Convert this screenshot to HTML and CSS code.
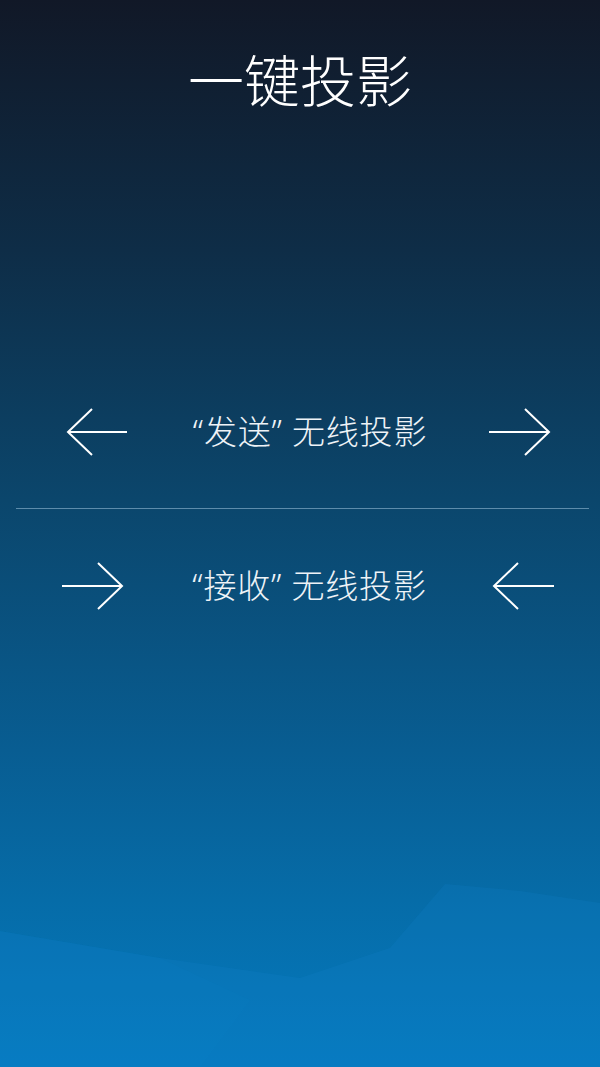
FILE: index.html
```html
<!DOCTYPE html>
<html lang="zh-CN">
<head>
<meta charset="utf-8">
<title>一键投影</title>
<link rel="stylesheet" href="styles.css">
</head>
<body>
<div class="page">
  <svg class="waves" viewBox="0 0 600 1067" preserveAspectRatio="none" aria-hidden="true">
    <polygon class="wave-a" points="0,931 160,958 300,978 390,948 445,884 520,891 600,903 600,1067 0,1067"/>
    <polygon class="wave-b" points="0,931 160,958 250,1000 200,1067 0,1067"/>
  </svg>
  <h1 class="title">一键投影</h1>
  <div class="options">
    <div class="row row-send">
      <svg class="arrow" viewBox="0 0 64 50"><polyline points="26,2 2,25 26,48"/><line x1="2" y1="25" x2="61" y2="25"/></svg>
      <span class="label">“发送” 无线投影</span>
      <svg class="arrow" viewBox="0 0 64 50"><polyline points="38,2 62,25 38,48"/><line x1="2" y1="25" x2="62" y2="25"/></svg>
    </div>
    <div class="divider"></div>
    <div class="row row-recv">
      <svg class="arrow" viewBox="0 0 64 50"><polyline points="38,2 62,25 38,48"/><line x1="2" y1="25" x2="62" y2="25"/></svg>
      <span class="label">“接收” 无线投影</span>
      <svg class="arrow" viewBox="0 0 64 50"><polyline points="26,2 2,25 26,48"/><line x1="2" y1="25" x2="62" y2="25"/></svg>
    </div>
  </div>
</div>
</body>
</html>
```
FILE: styles.css
```css
html, body {
  margin: 0;
  padding: 0;
}
body {
  font-family: "Noto Sans", "Noto Sans CJK SC", sans-serif;
  color: #fff;
}
.page {
  position: relative;
  width: 600px;
  height: 1067px;
  overflow: hidden;
  background: linear-gradient(to bottom,
    #111827 0px,
    #0e2d47 250px,
    #0b466c 500px,
    #085d92 750px,
    #066ca8 900px,
    #047abf 1067px);
}
.waves {
  position: absolute;
  left: 0;
  top: 0;
  width: 600px;
  height: 1067px;
}
.wave-a {
  fill: rgba(20, 130, 205, 0.2);
}
.wave-b {
  fill: rgba(20, 140, 215, 0.07);
}
.title {
  position: relative;
  margin: 0;
  padding-top: 52px;
  font-size: 56px;
  line-height: 56px;
  font-weight: 300;
  text-align: center;
  color: #fff;
}
.options {
  position: relative;
  margin-top: 247px;
  display: flex;
  flex-direction: column;
}
.row {
  height: 153px;
  display: flex;
  align-items: center;
  justify-content: space-between;
}
.row-send {
  padding: 0 49px 0 66px;
}
.row-recv {
  padding: 0 44px 0 60px;
}
.arrow {
  width: 64px;
  height: 50px;
  fill: none;
  stroke: #fff;
  stroke-width: 2;
}
.label {
  font-size: 33px;
  line-height: 40px;
  font-weight: 300;
  letter-spacing: 0.8px;
  padding-left: 3px;
  color: #eef3f7;
  white-space: pre;
}
.divider {
  height: 1px;
  margin: 0 11px 0 16px;
  background: #5d8cab;
}
```
